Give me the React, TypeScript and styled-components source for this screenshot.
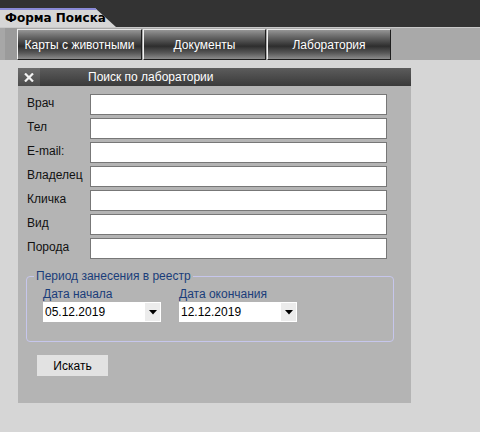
import React from 'react';
import styled, {createGlobalStyle} from 'styled-components';

const GlobalStyle = createGlobalStyle`
  html, body {
    margin: 0;
    padding: 0;
    background: #d6d6d6;
  }
  body {
    font-family: "Liberation Sans", Arial, sans-serif;
    font-size: 12px;
    color: #000;
  }
`

const TopBar = styled.div`
  height: 27px;
  box-sizing: border-box;
  padding-top: 8px;
  background: #333333;
`
const Tab = styled.div`
  width: 116px;
  height: 19px;
  box-sizing: border-box;
  padding-left: 5px;

  background: #d6d6d6;
  border-top: 2px solid #8a8ad8;
  clip-path: polygon(0 0, 95px 0, 116px 100%, 0 100%);

  font-family: "DejaVu Sans", Verdana, sans-serif;
  font-weight: bold;
  font-size: 12px;
  line-height: 17px;
  color: #000;
`

const NavStrip = styled.nav`
  display: flex;
  gap: 1px;
  height: 33px;
  box-sizing: border-box;
  padding: 1px 0 0 17px;

  border-top: 1px solid #c9c9c9;
  background: linear-gradient(to right, #a7a7a7 0 5px, #9b9b9b 5px 17px, #a9a9a9 17px);
`
const NavButton = styled.button<{ $w: number }>`
  width: ${props => props.$w}px;
  height: 31px;
  padding: 0;

  border: 1px solid;
  border-color: #e6e6e6 #1e1e1e #1e1e1e #f2f2f2;
  background: linear-gradient(#959595 0%, #6a6a6a 22%, #3c3c3c 48%, #2e2e2e 56%, #5a5a5a 80%, #8c8c8c 100%);

  font-family: "Liberation Sans", Arial, sans-serif;
  font-size: 12px;
  color: #fff;
  cursor: pointer;
`

const Content = styled.main`
  padding: 8px 0 0 18px;
`
const Panel = styled.section`
  width: 393px;
  height: 335px;
  background: #b4b4b4;
`
const PanelHeader = styled.header`
  display: flex;
  height: 18px;
  background: linear-gradient(#5c5c5c, #3a3a3a);
  color: #fff;
`
const CloseBox = styled.div`
  width: 22px;
  display: flex;
  align-items: center;
  justify-content: center;

  background: linear-gradient(#6c6c6c, #4c4c4c);
  font-family: "DejaVu Sans", Verdana, sans-serif;
  font-weight: bold;
  font-size: 13px;
  color: #f0f0f0;
`
const PanelTitle = styled.h2`
  margin: 0;
  padding-left: 48px;
  font-size: 12px;
  font-weight: normal;
  line-height: 18px;
`

const FormBody = styled.form`
  padding: 8px 0 0 8px;
`
const Rows = styled.div`
  display: flex;
  flex-direction: column;
  gap: 3px;
`
const Row = styled.label`
  display: flex;
  align-items: center;
  height: 21px;
`
const LabelText = styled.span`
  width: 63px;
  padding: 0 0 3px 1px;
  color: #111;
`
const TextInput = styled.input`
  width: 297px;
  height: 21px;
  box-sizing: border-box;
  margin: 0;
  padding: 0 3px;

  border: 1px solid #777;
  background: #fff;
  font: 12px "Liberation Sans", Arial, sans-serif;
`

const Period = styled.fieldset`
  width: 368px;
  box-sizing: border-box;
  margin: 10px 0 0 0;
  padding: 0;

  border: 1px solid #c6c6ec;
  border-radius: 4px;
`
const Legend = styled.legend`
  margin-left: 7px;
  padding: 0 2px;
  line-height: 14px;
  color: #1a3d7a;
`
const DateGrid = styled.div`
  display: flex;
  gap: 18px;
  padding: 4px 0 19px 16px;
`
const DateField = styled.div`
  display: flex;
  flex-direction: column;
  gap: 1px;
`
const DateLabel = styled.span`
  line-height: 14px;
  color: #1a3d7a;
`
const DateSelect = styled.div`
  display: flex;
  align-items: stretch;
  width: 118px;
  height: 20px;
  box-sizing: border-box;
  padding: 1px;
  background: #fff;
`
const DateValue = styled.span`
  flex: 1;
  padding-left: 1px;
  line-height: 18px;
  font-size: 12px;
`
const DropButton = styled.span`
  display: flex;
  align-items: center;
  justify-content: center;
  width: 15px;
  background: #ececec;
`

const SearchButton = styled.button`
  display: block;
  width: 71px;
  height: 21px;
  margin: 13px 0 0 11px;
  padding: 0;

  border: none;
  background: #e2e2e2;
  font: 12px "Liberation Sans", Arial, sans-serif;
  color: #000;
  cursor: pointer;
`

const Arrow = () => (
  <svg width="8" height="5" viewBox="0 0 8 5">
    <path d="M0 0H8L4 4.5Z" fill="#000"/>
  </svg>
)

const CloseIcon = () => (
  <svg width="10" height="9" viewBox="0 0 10 9">
    <path d="M1 0.5L9 8.5M9 0.5L1 8.5" stroke="#f2f2f2" strokeWidth="2.2"/>
  </svg>
)

const fields = ['Врач', 'Тел', 'E-mail:', 'Владелец', 'Кличка', 'Вид', 'Порода'];

export default function App() {
  return (
    <>
      <GlobalStyle/>
      <TopBar>
        <Tab>Форма Поиска</Tab>
      </TopBar>
      <NavStrip>
        <NavButton $w={125}>Карты с животными</NavButton>
        <NavButton $w={123}>Документы</NavButton>
        <NavButton $w={124}>Лаборатория</NavButton>
      </NavStrip>
      <Content>
        <Panel>
          <PanelHeader>
            <CloseBox><CloseIcon/></CloseBox>
            <PanelTitle>Поиск по лаборатории</PanelTitle>
          </PanelHeader>
          <FormBody onSubmit={e => e.preventDefault()}>
            <Rows>
              {fields.map(name => (
                <Row key={name}>
                  <LabelText>{name}</LabelText>
                  <TextInput type="text"/>
                </Row>
              ))}
            </Rows>
            <Period>
              <Legend>Период занесения в реестр</Legend>
              <DateGrid>
                <DateField>
                  <DateLabel>Дата начала</DateLabel>
                  <DateSelect>
                    <DateValue>05.12.2019</DateValue>
                    <DropButton><Arrow/></DropButton>
                  </DateSelect>
                </DateField>
                <DateField>
                  <DateLabel>Дата окончания</DateLabel>
                  <DateSelect>
                    <DateValue>12.12.2019</DateValue>
                    <DropButton><Arrow/></DropButton>
                  </DateSelect>
                </DateField>
              </DateGrid>
            </Period>
            <SearchButton type="submit">Искать</SearchButton>
          </FormBody>
        </Panel>
      </Content>
    </>
  );
}
